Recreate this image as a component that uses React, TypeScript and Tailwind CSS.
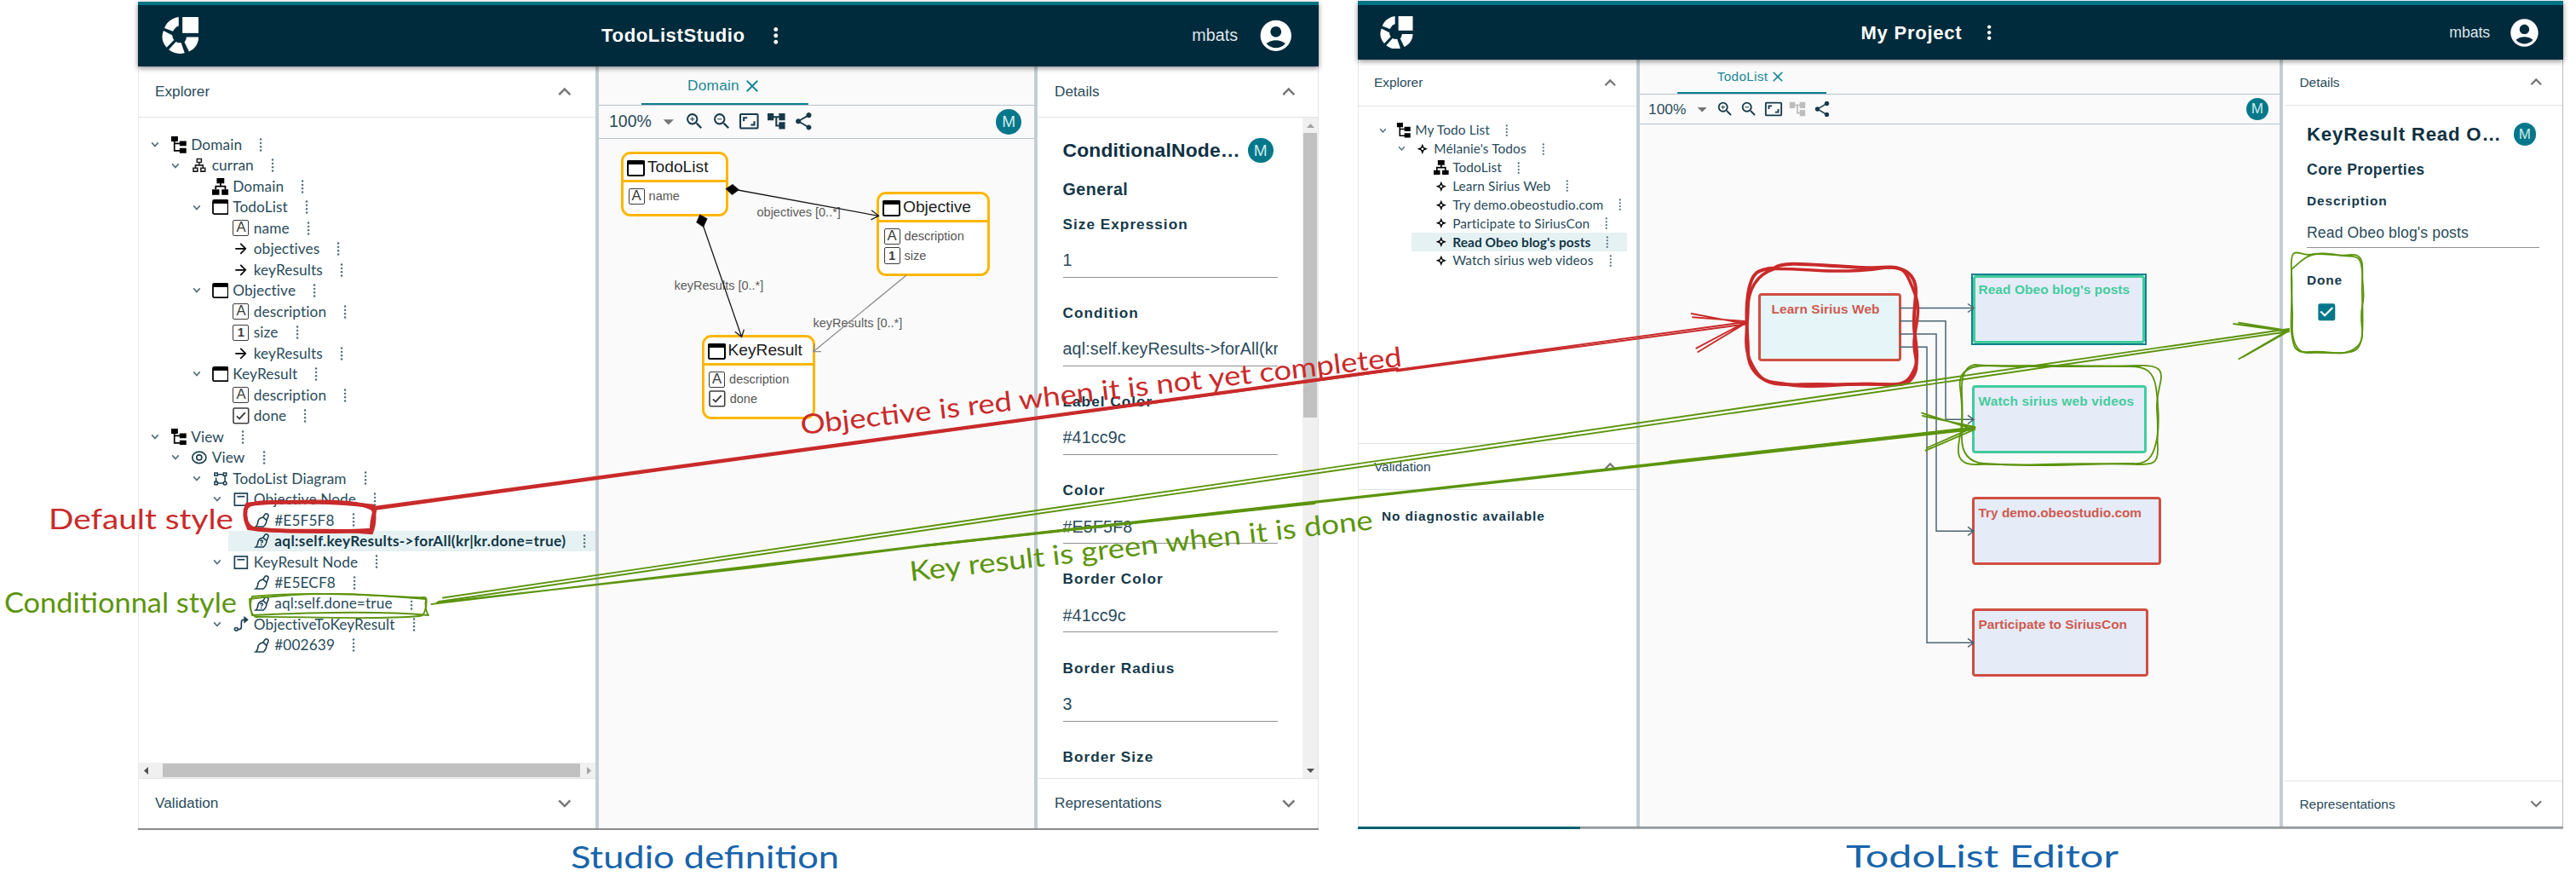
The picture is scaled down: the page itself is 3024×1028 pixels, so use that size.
import React from "react";
import {
  MdAccountCircle,
  MdAccountTree,
  MdArrowDropDown,
  MdArrowForward,
  MdAspectRatio,
  MdCheckBox,
  MdClose,
  MdExpandLess,
  MdExpandMore,
  MdMoreVert,
  MdShare,
  MdZoomIn,
  MdZoomOut,
} from "react-icons/md";

/* Both windows share these components. Sizes are in em, and each window sets its own base font size. */

type IconName =
  | "resource" | "domain" | "diagram" | "entity" | "text" | "number" | "bool"
  | "arrow" | "view" | "layout" | "node" | "style" | "cond" | "edge" | "object";

function BoxedGlyph({ children }: { children: React.ReactNode }) {
  return (
    <span className="flex h-[1.55em] w-[1.55em] items-center justify-center rounded-[2px] border-[1.5px] border-[#3c3c3c] text-[#3c3c3c]">
      {children}
    </span>
  );
}

function TreeIcon({ name }: { name: IconName }) {
  const svg = "h-[1.6em] w-[1.6em]";
  switch (name) {
    case "resource":
      return (
        <svg className={svg} viewBox="0 0 20 20">
          <path d="M1 0h8v6H1zM11 5.5h8v6h-8zM11 14h8v6h-8z" />
          <path d="M4.8 5v12.2H12M4.8 8.5H12" fill="none" stroke="#000" strokeWidth="1.7" />
        </svg>
      );
    case "domain":
      return (
        <svg className={svg} viewBox="0 0 20 20" fill="none" stroke="#222" strokeWidth="1.6">
          <path d="M7.4 2.6h5.2v4H7.4zM3 13.4h5v4H3zM12 13.4h5v4h-5zM10 6.6V10M5.5 13.4V10h9v3.4" />
        </svg>
      );
    case "diagram":
      return (
        <svg className={svg} viewBox="0 0 20 20">
          <path d="M5.5 0h9v6.4h-9zM0 13.4h8.6V20H0zM11.4 13.4H20V20h-8.6z" />
          <path d="M10 6v3.6M4.3 13.5V9.8h11.4v3.7" fill="none" stroke="#000" strokeWidth="1.8" />
        </svg>
      );
    case "entity":
      return (
        <svg className={svg} viewBox="0 0 20 20">
          <rect x="1" y="2" width="18" height="16.4" rx="1.6" fill="#fff" stroke="#000" strokeWidth="1.8" />
          <path d="M1 2h18v4H1z" />
        </svg>
      );
    case "text":
      return <BoxedGlyph><span className="font-[Liberation_Sans] text-[1.35em] leading-none">A</span></BoxedGlyph>;
    case "number":
      return <BoxedGlyph><span className="font-[Liberation_Sans] text-[1.2em] font-bold leading-none">1</span></BoxedGlyph>;
    case "bool":
      return (
        <svg className={svg} viewBox="0 0 20 20" fill="none" stroke="#3c3c3c">
          <rect x="1" y="1" width="18" height="18" rx="1.5" strokeWidth="1.6" />
          <path d="M5 10.5l3.2 3.2L15 6.3" strokeWidth="1.9" />
        </svg>
      );
    case "arrow":
      return <MdArrowForward className="h-[1.6em] w-[1.6em] text-black" />;
    case "view":
      return (
        <svg className={svg} viewBox="0 0 20 20" fill="none" stroke="#1d4152" strokeWidth="1.7">
          <ellipse cx="10" cy="10" rx="8.2" ry="6.9" />
          <circle cx="10" cy="10" r="3.1" />
        </svg>
      );
    case "layout":
      return (
        <svg className={svg} viewBox="0 0 20 20" fill="none" stroke="#1d4152" strokeWidth="1.6">
          <path d="M3 3h3.4v3.4H3zM13.6 3H17v3.4h-3.4zM3 13.6h3.4V17H3zM6.4 4.8h7.2M15.3 6.4v7M6.4 15.3h7.2M4.7 8.6v5" />
          <circle cx="15.3" cy="15.3" r="1.9" />
        </svg>
      );
    case "node":
      return (
        <svg className={svg} viewBox="0 0 20 20" fill="none" stroke="#1d4152" strokeWidth="1.7">
          <rect x="2.4" y="3" width="15.2" height="14.4" />
          <path d="M5.5 6.8h9" />
        </svg>
      );
    case "style":
    case "cond":
      return (
        <svg className={svg} viewBox="0 0 20 20" fill="none" stroke="#1d4152" strokeWidth="1.6">
          <path d="M2 17.3h9.200c2.400-1.600 3.800-4.200 4-7.600L11 6C7 6.600 5 8.600 4.800 12.300 4.600 14.800 3.600 16.200 2 17.300z" />
          <path d="M11 6l2.500-3.600c1.400-1.500 4.600.4 3.700 2.500L15.200 9.700" />
          {name === "cond" && <path d="M7.600 10.300c.6-1.800 3.400-1.200 2.900.5-.2.8-1.300.9-1.400 2M8.900 14v1.400" strokeWidth="1.5" />}
        </svg>
      );
    case "edge":
      return (
        <svg className={svg} viewBox="0 0 20 20" fill="none" stroke="#1d4152" strokeWidth="1.7">
          <circle cx="4.4" cy="15.6" r="1.9" />
          <path d="M6.3 15.8h1.6c2 0 2.6-1 2.6-3V7.6c0-2 .8-3.2 2.6-3.2h2" />
          <path d="M14.4 1.6l3.4 2.8-3.4 2.8z" fill="#1d4152" />
        </svg>
      );
    case "object":
      return (
        <svg className={svg} viewBox="0 0 20 20">
          <path fillRule="evenodd" d="M10 3l2 5 5 2-5 2-2 5-2-5-5-2 5-2zM10 8L8 10l2 2 2-2z" />
        </svg>
      );
  }
}

function Dots() {
  return (
    <svg className="ml-[1.55em] h-[1.3em] w-[0.5em] shrink-0" viewBox="0 0 5 15" fill="#4d6b79">
      <circle cx="2.5" cy="1.5" r="1.15" />
      <circle cx="2.5" cy="5.5" r="1.15" />
      <circle cx="2.5" cy="9.5" r="1.15" />
      <circle cx="2.5" cy="13.5" r="1.15" />
    </svg>
  );
}

type Row = { level: number; icon: IconName; label: string; open?: boolean; selected?: boolean; wide?: boolean };

const indent = ["ml-0", "ml-[1.99em]", "ml-[3.98em]", "ml-[5.97em]", "ml-[7.96em]"];

function TreeRow({ row }: { row: Row }) {
  const on = row.selected ? "bg-[#e5f1f3] font-bold text-[#143646]" : "text-[#2a4b5b]";
  return (
    <div className={"flex h-[1.988em] min-w-0 items-center whitespace-nowrap pl-[0.36em] " + indent[row.level] + " " + on}>
      <span className="mr-[0.84em] flex w-[1.2em] shrink-0 justify-center">
        {row.open && (
          <svg className="h-[0.6em] w-[0.8em]" viewBox="0 0 10 7" fill="none" stroke="#54707d" strokeWidth="1.7">
            <path d="M1.2 1.2L5 5.4l3.8-4.2" />
          </svg>
        )}
      </span>
      <span className="mr-[0.4em] flex w-[1.6em] shrink-0 justify-center"><TreeIcon name={row.icon} /></span>
      <span className="font-[Lato]">
        <span className={row.wide ? "text-[1.4em] tracking-[0.34px]" : "text-[1.4em] tracking-[0.12px]"}>{row.label}</span>
      </span>
      <Dots />
    </div>
  );
}

function Logo() {
  return (
    <svg className="h-[3.5em] w-[3.5em]" viewBox="0 0 38 38" fill="#fff">
      <path d="M21.3 0H38v16.6H21.3z" />
      <path d="M17.4 0v9.2c-1.9.5-3.6 1.8-4.6 3.6l-1.4 2L2.7 11.4C5 5.200 10.500.9 17.400 0z" />
      <path d="M1.700 14.200l9.200 4.800c.1 2 .6 3.500 1.600 4.800l-7.600 7.700C.4 26.600-.9 20.500 1.700 14.200z" />
      <path d="M14.600 25.600c1.900 1 3.600 1.200 5.300.9l3.700 10.700c-5.900 1.600-11.500.5-16.500-3.400z" />
      <path d="M25.400 20.800H38c0 6.400-3.600 12-9.900 14.800l-4.700-9.700c1.200-1.300 1.900-3 2-5.100z" />
    </svg>
  );
}

function Avatar() {
  return (
    <span className="flex h-[2.4em] w-[2.4em] shrink-0 items-center justify-center rounded-full bg-[#04788a] text-white">
      <span className="text-[1.55em] leading-none text-[#cfe9ec]">M</span>
    </span>
  );
}

function PanelHeader({ title, open, className }: { title: string; open?: boolean; className: string }) {
  const Chevron = open ? MdExpandLess : MdExpandMore;
  return (
    <div className={"flex shrink-0 items-center justify-between border-[#dfe3e5] text-[#2a4b5b] " + className}>
      <span className="text-[1.4em]">{title}</span>
      <Chevron className="h-[2.4em] w-[2.4em] text-[#757575]" />
    </div>
  );
}

function AppBar({ title, className, titleClass, textClass }: { title: string; className: string; titleClass: string; textClass: string }) {
  return (
    <header className={"relative z-10 flex shrink-0 items-center bg-[#002b3c] text-white shadow-[0_2px_6px_rgba(0,0,0,0.45)] border-[#007484] " + className}>
      <Logo />
      <div className={"flex items-center font-bold " + titleClass}>
        <span className={textClass}>{title}</span>
        <MdMoreVert className="ml-[1.7em] h-[2.4em] w-[2.4em]" />
      </div>
      <div className="ml-auto flex items-center">
        <span className="text-[1.6em] text-[#dfe6e9]">mbats</span>
        <MdAccountCircle className="ml-[1.9em] h-[3.54em] w-[3.54em]" />
      </div>
    </header>
  );
}

function Toolbar({ className, dimTree }: { className: string; dimTree?: boolean }) {
  return (
    <div className={"flex shrink-0 items-center border-b-[1.5px] border-[#b7c4ca] text-[#17394a] " + className}>
      <span className="w-[4.5em] text-[#2a4b5b]"><span className="text-[1.58em]">100%</span></span>
      <MdArrowDropDown className="h-[2.4em] w-[2.4em] text-[#757575]" />
      <div className="flex items-center gap-[0.6em] pl-[0.25em]">
        <MdZoomIn className="h-[2em] w-[2em]" />
        <MdZoomOut className="h-[2em] w-[2em]" />
        <MdAspectRatio className="h-[2em] w-[2em]" />
        <MdAccountTree className={dimTree ? "h-[2em] w-[2em] text-[#bdbdbd]" : "h-[2em] w-[2em]"} />
        <MdShare className="h-[2em] w-[2em]" />
      </div>
      <span className="ml-auto"><Avatar /></span>
    </div>
  );
}

function Heading({ title, section, titleClass }: { title: string; section: string; titleClass: string }) {
  return (
    <>
      <div className="flex h-[3em] items-center justify-between">
        <span className="whitespace-nowrap font-bold text-[#0f3142]"><span className={titleClass}>{title}</span></span>
        <Avatar />
      </div>
      <div className="mt-[1.28em] flex h-[2em] items-center font-bold text-[#15394a]">
        <span className="text-[1.6em] tracking-[0.025em]">{section}</span>
      </div>
    </>
  );
}

function Label({ children }: { children: React.ReactNode }) {
  return (
    <div className="flex h-[2em] items-center whitespace-nowrap font-bold text-[#15394a]">
      <span className="text-[1.4em] tracking-[0.058em]">{children}</span>
    </div>
  );
}

function Field({ label, value }: { label: string; value: string }) {
  return (
    <div className="h-[8.455em] shrink-0">
      <Label>{label}</Label>
      <div className="mt-[1.23em] flex h-[2.82em] items-start overflow-hidden whitespace-nowrap border-b-[1.5px] border-[#919191] text-[#2a4b5b]">
        <span className="flex h-[2.4em] items-center"><span className="text-[1.6em] tracking-[0.12px]">{value}</span></span>
      </div>
    </div>
  );
}

const studioTree: Row[] = [
  { level: 0, icon: "resource", label: "Domain", open: true },
  { level: 1, icon: "domain", label: "curran", open: true },
  { level: 2, icon: "diagram", label: "Domain" },
  { level: 2, icon: "entity", label: "TodoList", open: true },
  { level: 3, icon: "text", label: "name" },
  { level: 3, icon: "arrow", label: "objectives" },
  { level: 3, icon: "arrow", label: "keyResults" },
  { level: 2, icon: "entity", label: "Objective", open: true },
  { level: 3, icon: "text", label: "description" },
  { level: 3, icon: "number", label: "size" },
  { level: 3, icon: "arrow", label: "keyResults" },
  { level: 2, icon: "entity", label: "KeyResult", open: true },
  { level: 3, icon: "text", label: "description" },
  { level: 3, icon: "bool", label: "done" },
  { level: 0, icon: "resource", label: "View", open: true },
  { level: 1, icon: "view", label: "View", open: true },
  { level: 2, icon: "layout", label: "TodoList Diagram", open: true },
  { level: 3, icon: "node", label: "Objective Node", open: true },
  { level: 4, icon: "style", label: "#E5F5F8" },
  { level: 4, icon: "cond", label: "aql:self.keyResults->forAll(kr|kr.done=true)", selected: true, wide: true },
  { level: 3, icon: "node", label: "KeyResult Node", open: true },
  { level: 4, icon: "style", label: "#E5ECF8" },
  { level: 4, icon: "cond", label: "aql:self.done=true" },
  { level: 3, icon: "edge", label: "ObjectiveToKeyResult", open: true },
  { level: 4, icon: "style", label: "#002639" },
];

const projectTree: Row[] = [
  { level: 0, icon: "resource", label: "My Todo List", open: true },
  { level: 1, icon: "object", label: "Mélanie's Todos", open: true },
  { level: 2, icon: "diagram", label: "TodoList" },
  { level: 2, icon: "object", label: "Learn Sirius Web" },
  { level: 2, icon: "object", label: "Try demo.obeostudio.com" },
  { level: 2, icon: "object", label: "Participate to SiriusCon" },
  { level: 2, icon: "object", label: "Read Obeo blog's posts", selected: true },
  { level: 2, icon: "object", label: "Watch sirius web videos" },
];

function EntityNode({ title, rows, className }: { title: string; rows: [IconName, string][]; className: string }) {
  return (
    <div className={"absolute rounded-[11px] border-[3.4px] border-[#fdb603] bg-white " + className}>
      <div className="flex h-[33px] items-center border-b-[3.4px] border-[#fdb603] pl-[4px] text-[#1c1c1c]">
        <svg className="mr-[3px] mt-[3px] h-[19px] w-[21px]" viewBox="0 0 21 19">
          <rect x="1" y="1" width="19" height="17" rx="1.5" fill="#fff" stroke="#000" strokeWidth="2" />
          <path d="M0 .5h21V5H0z" />
        </svg>
        <span className="text-[19.2px] leading-none">{title}</span>
      </div>
      <div className="flex flex-col pl-[5.5px] pt-[5px]">
        {rows.map(([icon, label]) => (
          <div key={label} className="flex h-[22.7px] items-center gap-[5px] text-[#555]">
            <TreeIcon name={icon} />
            <span className="text-[14.5px] leading-none">{label}</span>
          </div>
        ))}
      </div>
    </div>
  );
}

function StudioDiagram() {
  return (
    <div className="relative flex-1 overflow-hidden">
      <EntityNode title="TodoList" rows={[["text", "name"]]} className="left-[26px] top-[15px] h-[76px] w-[125.500px]" />
      <EntityNode title="Objective" rows={[["text", "description"], ["number", "size"]]} className="left-[326px] top-[62px] h-[99px] w-[133px]" />
      <EntityNode title="KeyResult" rows={[["text", "description"], ["bool", "done"]]} className="left-[120.500px] top-[230px] h-[99px] w-[133px]" />
      <svg className="absolute inset-0 h-full w-full" fill="none" stroke="#1a1a1a" strokeWidth="1.3">
        <g transform="translate(-703 -163)">
          <g className="font-[Liberation_Sans] text-[14.500px]" fill="#5c5c5c" stroke="none">
            <text x="888.500" y="254">objectives [0..*]</text>
            <text x="791.500" y="340">keyResults [0..*]</text>
            <text x="954.500" y="383.500">keyResults [0..*]</text>
          </g>
          <path d="M866 223L1031 253.300M1023 246.800l8.500 6.500-9 4.600" />
          <path d="M852.500 221.500l7.500-4.700 7 6-7.500 5.300z" fill="#000" />
          <path d="M825.500 265L870.500 395M862.800 389.300l7.800 6 2.800-8.600" />
          <path d="M821.800 252.300l8 4.500-4.200 9.200-7.600-5.300z" fill="#000" />
          <path d="M1064 323L954.700 412.700M956.500 403.300l-1.800 9.400h9.200" stroke="#8c8c8c" />
        </g>
      </svg>
    </div>
  );
}

const nodeFrame = "absolute rounded-[4px] border-[3px] pt-[6px] text-[15.400px] font-bold leading-[19px] whitespace-nowrap ";

function ProjectDiagram() {
  return (
    <div className="relative flex-1 overflow-hidden">
      <div className={nodeFrame + "left-[139px] top-[198px] h-[80px] w-[167.500px] border-[#cf4e42] bg-[#e5f5f8] pl-[12.500px] tracking-[0.1px] text-[#cf5a50]"}>Learn Sirius Web</div>
      <div className="absolute left-[388.500px] top-[174.500px] h-[84px] w-[206.500px] border-2 border-[#14808f] bg-white">
        <div className="h-full w-full rounded-[4px] border-[3px] border-[#41cc9c] bg-[#e5ebf7] pl-[4px] pt-[4px] text-[15.400px] font-bold leading-[19px] text-[#45cb9d] tracking-[0.1px]">Read Obeo blog's posts</div>
      </div>
      <div className={nodeFrame + "left-[390px] top-[306px] h-[80px] w-[204.500px] border-[#41cc9c] bg-[#e5ebf7] pl-[4.500px] tracking-[0.2px] text-[#45cb9d]"}>Watch sirius web videos</div>
      <div className={nodeFrame + "left-[390px] top-[437px] h-[80px] w-[222px] border-[#cf4e42] bg-[#e5ebf7] pl-[4.500px] text-[#cf5a50]"}>Try demo.obeostudio.com</div>
      <div className={nodeFrame + "left-[390px] top-[568px] h-[80px] w-[207px] border-[#cf4e42] bg-[#e5ebf7] pl-[4.500px] text-[#cf5a50]"}>Participate to SiriusCon</div>
      <svg className="absolute inset-0 h-full w-full" fill="none" stroke="#4a6471" strokeWidth="1.500">
        <g transform="translate(-1926 -146)">
          <path d="M2231 361.500h87M2311 356.500l7 5-7 5" />
          <path d="M2231 376.700h54v115.600h33M2311 487.300l7 5-7 5" />
          <path d="M2231 392h43v231.300h44M2311 618.300l7 5-7 5" />
          <path d="M2231 407.300h32v347h55M2311 749.300l7 5-7 5" />
        </g>
      </svg>
    </div>
  );
}

function StudioWindow() {
  return (
    <section className="mt-[2px] flex h-[972px] w-[1386px] shrink-0 flex-col border-b-[2px] border-b-[#8a8a8a] text-[12.320px]">
      <AppBar
        title="TodoListStudio"
        className="h-[76px] border-t-[4px] pl-[28px] pr-[28px]"
        titleClass="ml-[473px]"
        textClass="text-[1.8em] tracking-[0.025em]"
      />
      <div className="flex min-h-0 flex-1">
        <aside className="flex w-[537px] shrink-0 flex-col border-l border-[#ececec] bg-white">
          <PanelHeader title="Explorer" open className="h-[60px] border-b-[1.500px] pl-[19px] pr-[21px]" />
          <div className="min-h-0 flex-1 overflow-hidden pl-[7px] pt-[19.500px]">
            {studioTree.map((row, i) => <TreeRow key={i} row={row} />)}
          </div>
          <div className="flex h-[18px] shrink-0 items-center bg-[#f0f0f0] pl-[6px] pr-[5px]">
            <svg className="h-[9px] w-[5px]" viewBox="0 0 5 9" fill="#505050"><path d="M5 0v9L0 4.500z" /></svg>
            <span className="ml-[17px] h-[16px] flex-1 bg-[#c1c1c1]" />
            <svg className="ml-[8px] h-[9px] w-[5px]" viewBox="0 0 5 9" fill="#a3a3a3"><path d="M0 0v9l5-4.500z" /></svg>
          </div>
          <PanelHeader title="Validation" className="h-[59px] border-t-[1.500px] pl-[19px] pr-[21px]" />
        </aside>
        <div className="w-[4px] shrink-0 bg-[#c3ced3]" />
        <main className="flex w-[511px] shrink-0 flex-col bg-[#fafafa]">
          <div className="flex h-[45.500px] shrink-0 border-b-[1.500px] border-[#b7c4ca] pl-[50px]">
            <div className="flex w-[196px] items-center justify-center gap-[3px] border-b-[2.500px] border-[#0c8090] pt-[3px] text-[#1a8796]">
              <span className="text-[17.250px] tracking-[0.250px]">Domain</span>
              <MdClose className="h-[24px] w-[24px]" />
            </div>
          </div>
          <Toolbar className="h-[39.500px] pl-[12px] pr-[15px]" />
          <StudioDiagram />
        </main>
        <div className="mr-[1.500px] w-[3.500px] shrink-0 bg-[#c3ced3]" />
        <aside className="flex min-w-0 flex-1 flex-col border-r border-[#e4e4e4] bg-white">
          <PanelHeader title="Details" open className="h-[60px] border-b-[1.500px] pl-[19px] pr-[19px]" />
          <div className="flex min-h-0 flex-1">
            <div className="flex w-[280.500px] flex-col overflow-hidden pl-[28.500px] pt-[20px]">
              <div className="pr-[5px]">
                <Heading title="ConditionalNode…" section="General" titleClass="text-[1.86em] tracking-[0.006em]" />
              </div>
              <div className="mt-[1.300em]">
                <Field label="Size Expression" value="1" />
                <Field label="Condition" value="aql:self.keyResults->forAll(kr|kr.done=true)" />
                <Field label="Label Color" value="#41cc9c" />
                <Field label="Color" value="#E5F5F8" />
                <Field label="Border Color" value="#41cc9c" />
                <Field label="Border Radius" value="3" />
                <Label>Border Size</Label>
              </div>
            </div>
            <div className="ml-auto flex w-[18px] flex-col items-center bg-[#f0f0f0]">
              <svg className="mb-[6px] mt-[7px] h-[5px] w-[9px]" viewBox="0 0 9 5" fill="#a3a3a3"><path d="M0 5h9L4.500 0z" /></svg>
              <span className="h-[334px] w-[16px] bg-[#c1c1c1]" />
              <svg className="mb-[6px] mt-auto h-[5px] w-[9px]" viewBox="0 0 9 5" fill="#505050"><path d="M0 0h9L4.500 5z" /></svg>
            </div>
          </div>
          <PanelHeader title="Representations" className="h-[59px] border-t-[1.500px] pl-[19px] pr-[19px]" />
        </aside>
      </div>
    </section>
  );
}

function ProjectWindow() {
  return (
    <section className="mt-[1px] flex h-[972px] w-[1415px] shrink-0 flex-col text-[11px]">
      <AppBar
        title="My Project"
        className="h-[69px] border-t-[5px] pl-[26px] pr-[26px]"
        titleClass="ml-[526px]"
        textClass="text-[2em] tracking-[0.035em]"
      />
      <div className="flex min-h-0 flex-1">
        <aside className="flex w-[327px] shrink-0 flex-col border-l border-[#e4e4e4] bg-white">
          <PanelHeader title="Explorer" open className="h-[55px] border-b-[1.500px] pl-[18px] pr-[18px]" />
          <div className="h-[395px] shrink-0 overflow-hidden pl-[18px] pr-[11px] pt-[17px]">
            {projectTree.map((row, i) => <TreeRow key={i} row={row} />)}
          </div>
          <PanelHeader title="Validation" open className="h-[55px] border-y-[1.500px] pl-[18px] pr-[18px]" />
          <div className="pl-[27px] pt-[20px]"><Label>No diagnostic available</Label></div>
        </aside>
        <div className="w-[4px] shrink-0 bg-[#c3ced3]" />
        <main className="flex w-[751px] shrink-0 flex-col bg-[#fafafa]">
          <div className="flex h-[41px] shrink-0 border-b-[1.500px] border-[#b7c4ca] pl-[44px]">
            <div className="flex w-[175px] items-center justify-center gap-[2px] border-b-[2.500px] border-[#0c8090] pt-[2px] text-[#1a8796]">
              <span className="text-[15.400px] tracking-[0.250px]">TodoList</span>
              <MdClose className="h-[20px] w-[20px]" />
            </div>
          </div>
          <Toolbar dimTree className="h-[35px] pl-[10px] pr-[13px]" />
          <ProjectDiagram />
        </main>
        <div className="mr-[2px] w-[3.500px] shrink-0 bg-[#c3ced3]" />
        <aside className="flex min-w-0 flex-1 flex-col border-r-[1.500px] border-[#bdbdbd] bg-white">
          <PanelHeader title="Details" open className="h-[54px] border-b-[1.500px] pl-[18px] pr-[18px]" />
          <div className="flex min-h-0 flex-1 flex-col overflow-hidden pl-[26.500px] pr-[27px] pt-[17px]">
            <div className="pr-[4px]">
              <Heading title="KeyResult Read O…" section="Core Properties" titleClass="text-[2.020em] tracking-[0.036em]" />
            </div>
            <div className="mt-[1.300em]">
              <Field label="Description" value="Read Obeo blog's posts" />
              <Label>Done</Label>
              <MdCheckBox className="ml-[9.500px] mt-[14px] h-[26.600px] w-[26.600px] text-[#04788a]" />
            </div>
          </div>
          <PanelHeader title="Representations" className="h-[54px] border-t-[1.500px] pl-[18px] pr-[18px]" />
        </aside>
      </div>
      <div className="flex h-[3px] shrink-0">
        <span className="w-[261px] bg-[#005f6e]" />
        <span className="flex-1 border-t border-[#7d8285] bg-[#a9adaf]" />
      </div>
    </section>
  );
}

/* Hand-drawn notes that lie over both windows. */
function Annotations() {
  return (
    <svg className="pointer-events-none absolute inset-0 z-20 h-full w-full" viewBox="0 0 3024 1028" fill="none" strokeLinecap="round" strokeLinejoin="round">
      <g stroke="#c92a2a">
        <path d="M290 592C330 587 400 589 438 594Q441 610 437 622C390 625 330 624 292 620Q285 605 290 592z" strokeWidth="4.500" />
        <path d="M288 598C292 586 320 590 360 589S430 590 440 599Q436 612 436 625C400 620 340 626 300 621Q286 618 288 598z" strokeWidth="4.500" />
        <path d="M439 596L1640 433" strokeWidth="3.800" />
        <path d="M439 598L2049 378M1640 435.500L2049 380.500" strokeWidth="2" />
        <path d="M1985.700 368L2049 380M1987 372.300L2048 377M1991.400 408.700L2049 378M1993.300 413L2048 380" strokeWidth="1.900" />
        <path d="M2083 314.500C2092 307 2120 310 2152 312S2190 315 2217 313.500C2244 314 2250 330 2249 345S2246 372 2247 385S2253 420 2248 432S2238 450 2226 451S2190 449 2152 452S2100 451 2083 449S2052 433 2052 413S2048 372 2052 345S2064 316 2083 314.500z" strokeWidth="4" />
        <path d="M2083 315.500C2110 315 2130 318 2152 318S2190 318 2214 314S2240 326 2248 345S2248 384 2247 400S2253 426 2248 438S2236 453 2212 451S2180 452 2150 451S2110 452 2090 451S2062 440 2054 422S2052 384 2052 362S2062 322 2083 315.500z" strokeWidth="3.500" />
      </g>
      <g stroke="#5c940d">
        <path d="M296 700C360 694 440 698 500 703Q498 714 503 722C440 716 360 719 296 722Q292 710 296 700z" strokeWidth="1.800" />
        <path d="M293 703C300 702 350 696 400 697S480 702 498 701Q502 700 500 712T492 723C440 728 340 723 300 724Q293 720 293 703z" strokeWidth="1.800" />
        <path d="M520 701.500L1200 601.500 2180 459 2687 386M515 706L1200 605.500 2180 463.500 2687 389" strokeWidth="1.900" />
        <path d="M506.500 709L880 664.500 1084 640 2318 502M513 707L880 666.500 1084 641 2318 504" strokeWidth="1.900" />
        <path d="M1084 640.500L1543 590.500M1960 542L2318 502" strokeWidth="3" />
        <path d="M2622 380L2687 389M2628 378.700L2686 388M2628.300 421.300L2687 387M2633 419L2686 389" strokeWidth="1.800" />
        <path d="M2256 484.700L2318 504M2257 488L2318 501M2260.600 528.700L2318 504M2262 525.500L2316 502" strokeWidth="1.900" />
        <path d="M2330 429C2370 431 2470 430 2512 429S2530 450 2532 480S2532 505 2533 525S2526 545 2510 545S2450 543 2400 545S2350 544 2320 545S2300 520 2302 505S2303 470 2301 455S2306 430 2330 429z" strokeWidth="1.800" />
        <path d="M2318 428C2335 430 2350 429 2400 429S2480 430 2500 430S2528 436 2531 455S2535 500 2532 515S2525 545 2505 544S2440 546 2400 546S2350 545 2330 544S2302 530 2303 510S2304 480 2303 460S2308 430 2318 428z" strokeWidth="1.800" />
        <path d="M2711 299C2725 296 2735 298 2750 300S2772 297 2773 320S2776 345 2773 360S2774 385 2773 395S2763 412 2752 414S2730 411 2711 413S2692 405 2690 390S2692 350 2690 318S2697 299 2711 299z" strokeWidth="1.800" />
        <path d="M2690 316C2700 308 2708 298 2722 298S2745 301 2760 299S2774 312 2773 330S2775 370 2773 392S2762 413 2750 414S2725 413 2710 414S2690 398 2691 380S2689 345 2690 316z" strokeWidth="1.800" />
      </g>
      <g className="font-[Lato] text-[32px]">
        <text x="57" y="621" textLength="217" lengthAdjust="spacingAndGlyphs" fill="#c92a2a">Default style</text>
        <text x="5" y="719" textLength="273" lengthAdjust="spacingAndGlyphs" fill="#5c940d">Conditionnal style</text>
        <text transform="translate(941 510) rotate(-6.500)" textLength="710" lengthAdjust="spacingAndGlyphs" fill="#c92a2a">Objective is red when it is not yet completed</text>
        <text transform="translate(1069 682) rotate(-6.400)" textLength="547" lengthAdjust="spacingAndGlyphs" fill="#5c940d">Key result is green when it is done</text>
      </g>
      <g className="font-[Lato] text-[37px]" fill="#1864ab">
        <text x="670" y="1019" textLength="315" lengthAdjust="spacingAndGlyphs">Studio definition</text>
        <text x="2167" y="1018" textLength="320" lengthAdjust="spacingAndGlyphs">TodoList Editor</text>
      </g>
    </svg>
  );
}

export default function App() {
  return (
    <div className="relative flex h-[1028px] w-[3024px] items-start gap-[46px] overflow-hidden bg-white pl-[162px] font-['Liberation_Sans',sans-serif] leading-normal">
      <StudioWindow />
      <ProjectWindow />
      <Annotations />
    </div>
  );
}
